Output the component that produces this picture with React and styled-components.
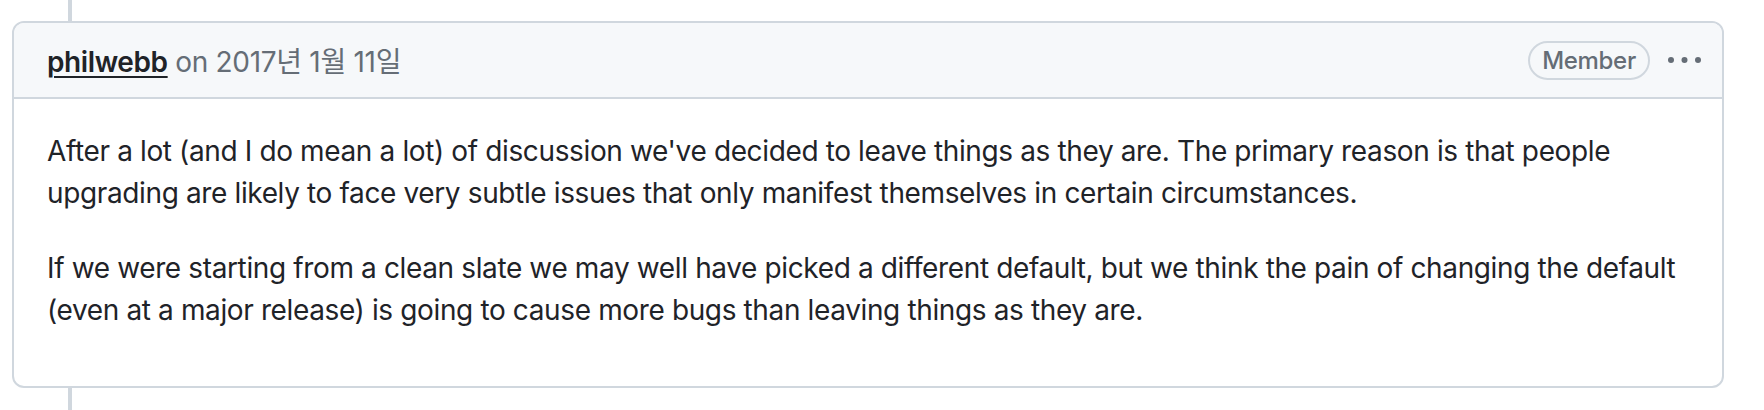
import styled, { createGlobalStyle } from "styled-components";

const GlobalStyle = createGlobalStyle`
  body {
    margin: 0;
    background: #ffffff;
    font-family: Inter, "Noto Sans CJK KR", sans-serif;
    color: #1f2328;
  }
`;

const Timeline = styled.div`
  width: 1764px;
  height: 410px;
  overflow: hidden;
`;

const Rail = styled.div`
  height: ${(p) => p.h}px;
  margin-left: 68px;
  border-left: 4px solid #d0d7de;
`;

const Comment = styled.div`
  margin-left: 12px;
  width: 1712px;
  height: 367px;
  box-sizing: border-box;
  border: 2px solid #d0d7de;
  border-radius: 12px;
  overflow: hidden;
`;

const Header = styled.div`
  display: flex;
  align-items: center;
  height: 76px;
  box-sizing: border-box;
  padding: 0 18px 0 33px;
  background: #f6f8fa;
  border-bottom: 2px solid #d0d7de;
`;

const Meta = styled.div`
  flex: 1;
  font-size: 28px;
  letter-spacing: -0.3px;
  color: #656d76;
  white-space: nowrap;
`;

const Author = styled.a`
  color: #1f2328;
  font-weight: 560;
  letter-spacing: -0.4px;
  text-decoration: underline;
  text-underline-offset: 4px;
  text-decoration-thickness: 2px;
`;

const Badge = styled.span`
  display: inline-flex;
  align-items: center;
  justify-content: center;
  width: 122px;
  height: 39px;
  box-sizing: border-box;
  border: 2px solid #d0d7de;
  border-radius: 40px;
  font-size: 24px;
  font-weight: 500;
  letter-spacing: -0.3px;
  color: #656d76;
`;

const Kebab = styled.button`
  display: flex;
  align-items: center;
  justify-content: center;
  margin-left: 14px;
  padding: 0;
  width: 40px;
  height: 40px;
  border: 0;
  background: transparent;
  color: #656d76;
`;

const Body = styled.div`
  padding: 32px 33px 0 33px;
  font-size: 28px;
  line-height: 41.6px;
  letter-spacing: -0.37px;
`;

const Para = styled.p`
  margin: 0 0 34px;
`;

export default function App() {
  return (
    <>
      <GlobalStyle />
      <Timeline>
        <Rail h={21} />
        <Comment>
          <Header>
            <Meta>
              <Author>philwebb</Author> on 2017년 1월 11일
            </Meta>
            <Badge>Member</Badge>
            <Kebab aria-label="Show options">
              <svg width="36" height="12" viewBox="0 0 36 12" fill="currentColor">
                <circle cx="5" cy="6" r="3" />
                <circle cx="18.5" cy="6" r="3" />
                <circle cx="32" cy="6" r="3" />
              </svg>
            </Kebab>
          </Header>
          <Body>
            <Para>
              After a lot (and I do mean a lot) of discussion we've decided to leave things as
              they are. The primary reason is that people upgrading are likely to face very subtle
              issues that only manifest themselves in certain circumstances.
            </Para>
            <Para>
              If we were starting from a clean slate we may well have picked a different default,
              but we think the pain of changing the default (even at a major release) is going to
              cause more bugs than leaving things as they are.
            </Para>
          </Body>
        </Comment>
        <Rail h={30} />
      </Timeline>
    </>
  );
}
